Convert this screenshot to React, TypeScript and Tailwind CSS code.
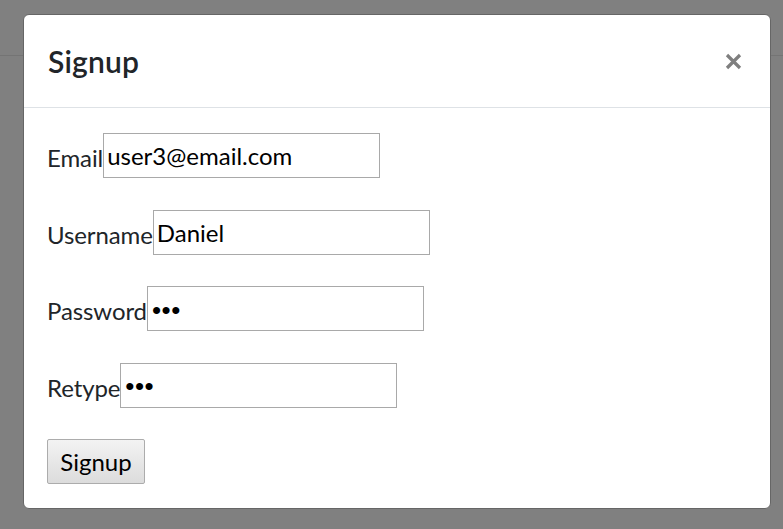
import React from "react";

const FIELDS = [
  { label: "Email", type: "text", value: "user3@email.com" },
  { label: "Username", type: "text", value: "Daniel" },
  { label: "Password", type: "password", value: "abc" },
  { label: "Retype", type: "password", value: "abc" },
];

export default function App() {
  return (
    <div className="relative w-[783px] h-[529px] overflow-hidden bg-[#808080] font-['Lato','Liberation_Sans',sans-serif]">
      {/* page behind the backdrop */}
      <div className="h-[56px] border-b border-[#747474]" />

      {/* modal dialog */}
      <div className="absolute left-[23px] top-[14px] w-[748px] h-[495px] bg-white border border-[#666666] rounded-[6px] flex flex-col">
        <div className="flex items-center justify-between h-[93px] px-[24px] border-b border-[#dee2e6]">
          <h5 className="text-[30px] leading-[45px] font-semibold text-[#212529] tracking-[0.2px]">Signup</h5>
          <button className="w-[18px] h-[18px] mr-[4px] flex items-center justify-center" aria-label="Close">
            <svg width="17" height="17" viewBox="0 0 17 17">
              <path d="M2 2 L15 15 M15 2 L2 15" stroke="#7f7f7f" strokeWidth="3.2" strokeLinecap="butt" />
            </svg>
          </button>
        </div>

        <div className="flex flex-col gap-[31.5px] px-[23px] pt-[25px]">
          {FIELDS.map(f => (
            <div key={f.label} className="flex items-center h-[45px] text-[24px] text-[#212529]">
              <label className="pt-[5px] tracking-[-0.1px]">{f.label}</label>
              <input
                type={f.type}
                defaultValue={f.value}
                className={`w-[277px] h-[45px] border border-[#a9a9a9] px-[3px] text-black outline-none ${
                  f.type === "password"
                    ? "font-['Liberation_Sans',sans-serif] text-[26px] tracking-[0.5px] pl-[4px] pt-[3px]"
                    : "font-['Lato','Liberation_Sans',sans-serif] text-[24px]"
                }`}
              />
            </div>
          ))}
          <div>
            <button className="w-[98px] h-[45px] border border-[#acacac] rounded-[2px] bg-gradient-to-b from-[#f3f3f3] to-[#dcdcdc] text-[24px] text-black">
              Signup
            </button>
          </div>
        </div>
      </div>
    </div>
  );
}
